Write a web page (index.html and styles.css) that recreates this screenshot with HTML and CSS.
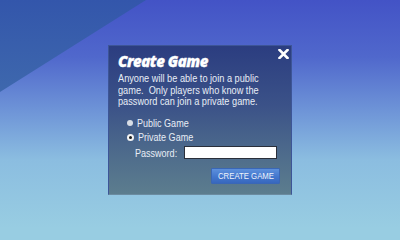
FILE: index.html
```html
<!DOCTYPE html>
<html>
<head>
<meta charset="utf-8">
<link rel="stylesheet" href="styles.css">
</head>
<body>
<div class="stage">
  <div class="dialog">
    <button class="close" aria-label="Close">
      <svg width="11" height="10" viewBox="0 0 11 10"><path d="M1.5 1 L9.5 9 M9.5 1 L1.5 9" stroke="#fff" stroke-width="2.6" stroke-linecap="square"/></svg>
    </button>
    <h1 class="title">Create Game</h1>
    <p class="desc"><span class="narrow">Anyone will be able to join a public<br>game.&nbsp; Only players who know the<br>password can join a private game.</span></p>
    <div class="options">
      <label class="opt r1"><span class="radio"></span><span class="narrow">Public Game</span></label>
      <label class="opt r2"><span class="radio checked"></span><span class="narrow">Private Game</span></label>
      <div class="pw-row"><span class="pw-label"><span class="narrow">Password:</span></span><span class="pw-input"></span></div>
    </div>
    <div class="actions"><button class="btn"><span class="narrow">CREATE GAME</span></button></div>
  </div>
</div>
</body>
</html>
```

FILE: styles.css
```css
html, body { margin: 0; padding: 0; width: 400px; height: 228px; overflow: hidden; background: #98cde2; }
body {
  font-family: "Liberation Sans", Arial, sans-serif;
}
.stage {
  position: relative;
  width: 400px;
  height: 228px;
  box-sizing: border-box;
  padding-top: 45px;
  display: flex;
  justify-content: center;
  align-items: flex-start;
  background: linear-gradient(to bottom, #4353c6 0%, #5068cc 25%, #7097d8 50%, #8bbde0 70%, #98cde2 100%);
}
.stage::before {
  content: "";
  position: absolute;
  left: 0; top: 0;
  width: 146px; height: 92px;
  clip-path: polygon(0 0, 100% 0, 0 100%);
  background: linear-gradient(to bottom, #3356ab, #3e68ad);
}
.dialog {
  position: relative;
  width: 184px;
  height: 150px;
  box-sizing: border-box;
  border: 1px solid #3d5597;
  border-bottom-color: #6b8ba0;
  background: linear-gradient(to bottom, #2b3d80 0%, #3b5288 40%, #4f6d8c 75%, #5c7d8e 100%);
  padding: 5px 10px 0 9px;
  color: #e9eef6;
}
.close {
  position: absolute;
  right: 2px; top: 3px;
  border: 0; background: none; padding: 0;
  width: 11px; height: 10px;
  display: block;
}
.close svg { display: block; }
.title {
  margin: 0;
  font-family: "Open Sans", sans-serif;
  font-weight: 800;
  font-style: italic;
  font-size: 15px;
  line-height: 20px;
  color: #fff;
  letter-spacing: -0.5px;
  -webkit-text-stroke: 0.3px #fff;
}
.narrow {
  display: inline-block;
  transform: scaleX(0.785);
  transform-origin: 0 50%;
  white-space: nowrap;
}
.desc {
  margin: 2px 0 0 0;
  font-size: 11.5px;
  line-height: 11.7px;
  color: #e8eef6;
}
.desc .narrow { transform: scaleX(0.8); }
.options {
  margin-top: 7px;
  padding-left: 9px;
  display: flex;
  flex-direction: column;
  font-size: 11.5px;
  color: #e8eef6;
}
.opt {
  display: flex;
  align-items: center;
  gap: 4px;
}
.r1 { height: 15px; }
.r2 { height: 14px; }
.radio {
  flex: none;
  width: 6px; height: 6px;
  border-radius: 50%;
  background: #d8dde6;
  box-sizing: border-box;
}
.radio.checked {
  width: 7px; height: 7px;
  background: #1a1a1a;
  border: 2px solid #f4f4f4;
}
.pw-row {
  display: flex;
  align-items: center;
  padding-left: 8px;
  height: 17px;
}
.pw-label { width: 49px; flex: none; }
.pw-input {
  width: 93px; height: 13px;
  box-sizing: border-box;
  background: #fff;
  border: 1px solid #2a2f3a;
}
.actions {
  display: flex;
  justify-content: flex-end;
  margin-top: 7px;
  padding-right: 1px;
}
.btn {
  width: 69px; height: 16px;
  border: 1px solid #3a67b6;
  border-radius: 1px;
  background: linear-gradient(to bottom, #5d90dc 0%, #4579cf 50%, #3767bd 100%);
  color: #eef3fb;
  font-family: "Liberation Sans", Arial, sans-serif;
  font-size: 9.6px;
  padding: 0 0 0 6px;
  line-height: 14px;
  text-align: left;
}
.btn .narrow { transform: scaleX(0.81); }
```
